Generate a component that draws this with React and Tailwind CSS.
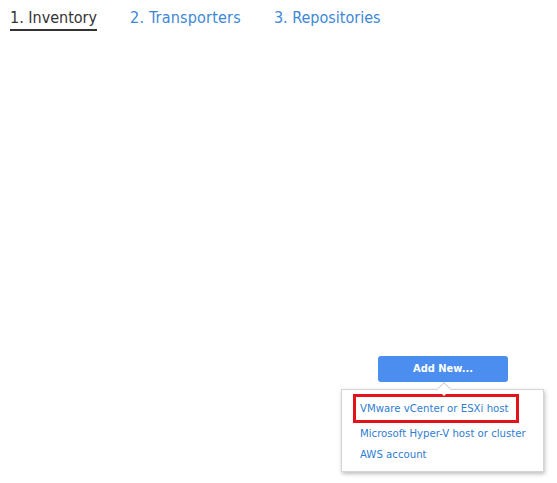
import React from 'react'

const font = { fontFamily: '"DejaVu Sans Condensed", sans-serif' }

export default function App() {
  return (
    <div className="w-[557px] h-[483px] bg-white relative overflow-hidden" style={font}>
      <div className="flex items-start gap-[33px] pl-[10px] pt-[8px]">
        <div className="text-[16px] text-[#333] border-b-2 border-[#333] pb-[1px] leading-[20px]">1. Inventory</div>
        <div className="text-[16px] text-[#3d87d8] leading-[20px] tracking-[0.2px]">2. Transporters</div>
        <div className="text-[16px] text-[#3d87d8] leading-[20px]">3. Repositories</div>
      </div>

      <div className="flex justify-end pr-[49px] mt-[324px]">
        <div className="relative">
          <button className="w-[130px] h-[26px] rounded-[3px] bg-[#4b8ef0] text-white text-[11px] font-bold">
            Add New...
          </button>
          <div className="absolute left-[-37px] top-[34px] w-[203px] h-[83px] bg-white border border-[#d4d4d4] shadow-[1px_2px_4px_rgba(0,0,0,0.25)] pt-[4px] px-[11px]">
            <div className="absolute -top-[6px] left-[97px] w-[10px] h-[10px] bg-white border-l border-t border-[#d4d4d4] rotate-45" />
            <div className="border-[3px] border-[#e2131b] px-[4px] h-[29px] flex items-center w-[166px]">
              <span className="text-[11.3px] text-[#2f7dd1] whitespace-nowrap pt-[2px]">VMware vCenter or ESXi host</span>
            </div>
            <div className="text-[11.3px] text-[#2f7dd1] pl-[7px] leading-[21px] whitespace-nowrap">Microsoft Hyper-V host or cluster</div>
            <div className="text-[11.3px] text-[#2f7dd1] pl-[7px] leading-[21px] whitespace-nowrap">AWS account</div>
          </div>
        </div>
      </div>
    </div>
  )
}
